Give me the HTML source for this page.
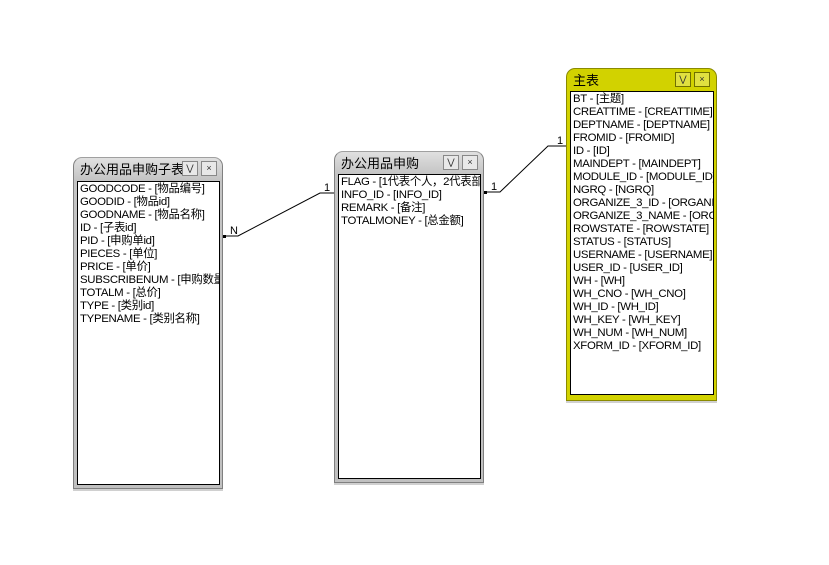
<!DOCTYPE html>
<html><head><meta charset="utf-8"><style>
body{margin:0;width:829px;height:565px;background:#fff;position:relative;overflow:hidden;font-family:"Liberation Sans","Noto Sans CJK SC",sans-serif}
.t{position:absolute;border-radius:9px 9px 0 0;box-sizing:border-box}
.g{background:linear-gradient(#e0e0e0,#c4c4c4 22px,#c0c0c0);border:1px solid #808080;border-top-color:#a0a0a0}
.y{background:#d2d200;border:1px solid #8a8a00}
.ttl{position:absolute;left:6px;top:1px;font-size:13px;color:#000;white-space:nowrap}
.btn{position:absolute;top:3px;width:16px;height:15px;box-sizing:border-box;border:1px solid #888;font-size:9px;line-height:13px;text-align:center;color:#333}
.g .btn{background:#e8e8e8}
.y .btn{background:#e0e040;border-color:#707000}
.in{position:absolute;background:#fff;border:1px solid #000;overflow:hidden;box-sizing:border-box;padding:1px 0 0 2px}
.in div{font-size:11.4px;line-height:13px;white-space:nowrap;letter-spacing:-0.3px}
.sh{position:absolute;height:2px;background:#d0d0d0}
</style></head><body>
<svg width="829" height="565" style="position:absolute;left:0;top:0">
<polyline points="224,236 238,236 320,193 334,193" fill="none" stroke="#000" stroke-width="1"/>
<polyline points="484,192 500,192 548,146 566,146" fill="none" stroke="#000" stroke-width="1"/>
<rect x="223" y="235" width="3" height="3"/><rect x="484" y="191" width="3" height="3"/>
<text x="230" y="234" font-size="11" font-family="Liberation Sans">N</text>
<text x="324" y="191" font-size="11" font-family="Liberation Sans">1</text>
<text x="491" y="190" font-size="11" font-family="Liberation Sans">1</text>
<text x="557" y="144" font-size="11" font-family="Liberation Sans">1</text>
</svg>

<div class="t g" style="left:73px;top:157px;width:150px;height:332px">
<div class="ttl">办公用品申购子表</div>
<div class="btn" style="left:108px">&#8897;</div><div class="btn" style="left:127px">×</div>
<div class="in" style="left:3px;top:23px;width:143px;height:304px">
<div>GOODCODE - [物品编号]</div><div>GOODID - [物品id]</div><div>GOODNAME - [物品名称]</div><div>ID - [子表id]</div><div>PID - [申购单id]</div><div>PIECES - [单位]</div><div>PRICE - [单价]</div><div>SUBSCRIBENUM - [申购数量]</div><div>TOTALM - [总价]</div><div>TYPE - [类别id]</div><div>TYPENAME - [类别名称]</div>
</div></div>
<div class="sh" style="left:73px;top:489px;width:150px"></div>

<div class="t g" style="left:334px;top:151px;width:150px;height:332px">
<div class="ttl">办公用品申购</div>
<div class="btn" style="left:108px">&#8897;</div><div class="btn" style="left:127px">×</div>
<div class="in" style="left:3px;top:22px;width:143px;height:305px">
<div>FLAG - [1代表个人，2代表部门]</div><div>INFO_ID - [INFO_ID]</div><div>REMARK - [备注]</div><div>TOTALMONEY - [总金额]</div>
</div></div>
<div class="sh" style="left:334px;top:483px;width:150px"></div>

<div class="t y" style="left:566px;top:68px;width:151px;height:333px">
<div class="ttl">主表</div>
<div class="btn" style="left:108px">&#8897;</div><div class="btn" style="left:127px">×</div>
<div class="in" style="left:3px;top:22px;width:144px;height:304px">
<div>BT - [主题]</div><div>CREATTIME - [CREATTIME]</div><div>DEPTNAME - [DEPTNAME]</div><div>FROMID - [FROMID]</div><div>ID - [ID]</div><div>MAINDEPT - [MAINDEPT]</div><div>MODULE_ID - [MODULE_ID]</div><div>NGRQ - [NGRQ]</div><div>ORGANIZE_3_ID - [ORGANIZE_3_ID]</div><div>ORGANIZE_3_NAME - [ORGANIZE_3_NAME]</div><div>ROWSTATE - [ROWSTATE]</div><div>STATUS - [STATUS]</div><div>USERNAME - [USERNAME]</div><div>USER_ID - [USER_ID]</div><div>WH - [WH]</div><div>WH_CNO - [WH_CNO]</div><div>WH_ID - [WH_ID]</div><div>WH_KEY - [WH_KEY]</div><div>WH_NUM - [WH_NUM]</div><div>XFORM_ID - [XFORM_ID]</div>
</div></div>
<div class="sh" style="left:566px;top:401px;width:151px"></div>
</body></html>
